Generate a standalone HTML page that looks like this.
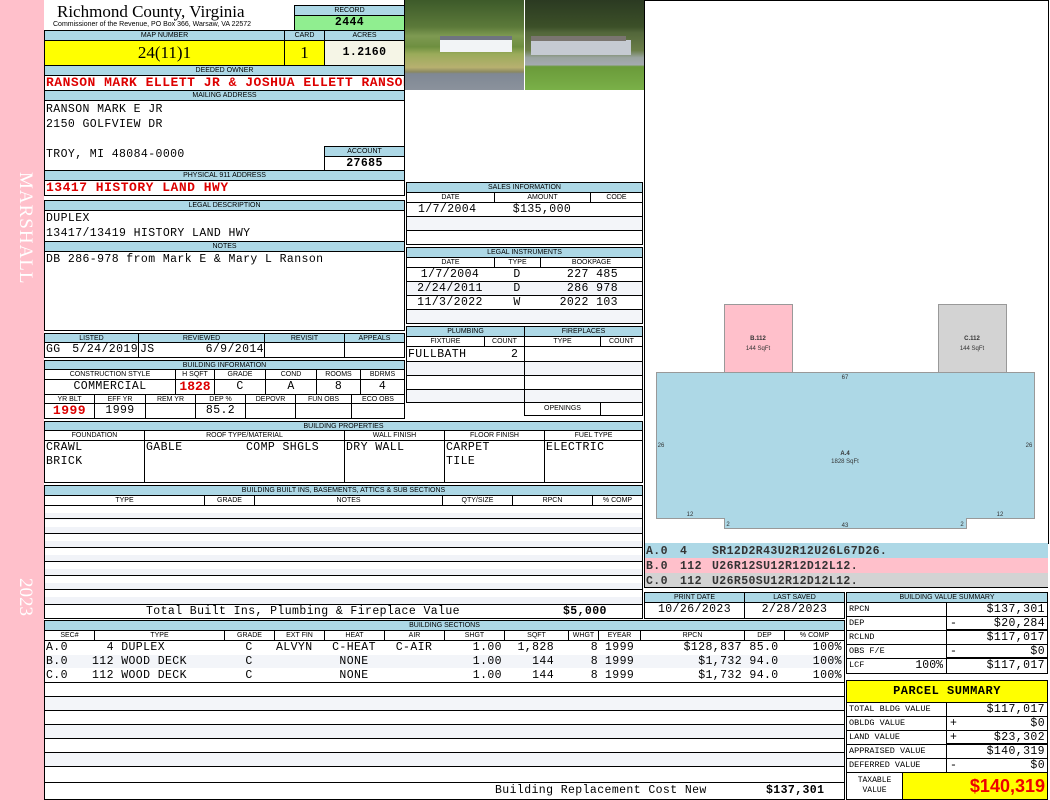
<!DOCTYPE html>
<html><head><meta charset="utf-8"><style>
*{margin:0;padding:0;box-sizing:border-box}
body{width:1050px;height:800px;position:relative;background:#fff;overflow:hidden;font-family:"Liberation Sans",sans-serif}
div{position:absolute}
.c{border:1px solid #000;background:#fff}
.h{background:#add8e6;border:1px solid #000;font:7px/9px "Liberation Sans",sans-serif;text-align:center;color:#000;white-space:nowrap;overflow:hidden}
.m{font:11.5px/14px "Liberation Mono",monospace;letter-spacing:0.4px;white-space:nowrap;color:#000}
.r{color:#d00;font-weight:bold;font-size:13px;letter-spacing:0.5px}
.g{background:#f3f5f9}
.t{font:8.5px/13px "Liberation Mono",monospace;white-space:nowrap}
.ce{text-align:center}.ri{text-align:right}
</style></head><body>
<div style="left:0;top:0;width:44px;height:800px;background:#ffc0cb"></div>
<div style="left:12px;top:172px;width:24px;font:19px 'Liberation Serif',serif;color:#fff;writing-mode:vertical-rl;letter-spacing:1px">MARSHALL</div>
<div style="left:12px;top:578px;width:24px;font:19px 'Liberation Serif',serif;color:#fff;writing-mode:vertical-rl">2023</div>

<div style="left:57px;top:2px;font:17px/20px 'Liberation Serif',serif">Richmond County, Virginia</div>
<div style="left:53px;top:20px;font:7px/9px 'Liberation Sans',sans-serif;white-space:nowrap">Commissioner of the Revenue, PO Box 366, Warsaw, VA 22572</div>
<div class="h" style="left:294px;top:5px;width:111px;height:11px">RECORD</div>
<div class="c m" style="left:294px;top:15px;width:111px;height:16px;background:#90ee90;text-align:center;font-weight:bold;line-height:14px">2444</div>

<div class="h" style="left:44px;top:30px;width:241px;height:11px">MAP NUMBER</div>
<div class="h" style="left:284px;top:30px;width:41px;height:11px">CARD</div>
<div class="h" style="left:324px;top:30px;width:81px;height:11px">ACRES</div>
<div class="c" style="left:44px;top:40px;width:241px;height:26px;background:#ffff00;font:17px/24px 'Liberation Serif',serif;text-align:center">24(11)1</div>
<div class="c" style="left:284px;top:40px;width:41px;height:26px;background:#ffff00;font:17px/24px 'Liberation Serif',serif;text-align:center">1</div>
<div class="c m" style="left:324px;top:40px;width:81px;height:26px;background:#f5f5e6;text-align:center;line-height:24px;font-weight:bold">1.2160</div>

<div class="h" style="left:44px;top:65px;width:361px;height:11px">DEEDED OWNER</div>
<div class="c m r" style="left:44px;top:75px;width:361px;height:16px;overflow:hidden;padding-left:1px">RANSON MARK ELLETT JR &amp; JOSHUA ELLETT RANSON</div>
<div class="h" style="left:44px;top:90px;width:361px;height:11px">MAILING ADDRESS</div>
<div class="c" style="left:44px;top:100px;width:361px;height:71px"></div>
<div class="m" style="left:46px;top:103px">RANSON MARK E JR</div>
<div class="m" style="left:46px;top:118px">2150 GOLFVIEW DR</div>
<div class="m" style="left:46px;top:148px">TROY, MI 48084-0000</div>
<div class="h" style="left:324px;top:146px;width:81px;height:11px">ACCOUNT</div>
<div class="c m" style="left:324px;top:156px;width:81px;height:15px;text-align:center;font-weight:bold;line-height:13px">27685</div>
<div class="h" style="left:44px;top:170px;width:361px;height:11px">PHYSICAL 911 ADDRESS</div>
<div class="c m r" style="left:44px;top:180px;width:361px;height:16px;padding-left:1px">13417 HISTORY LAND HWY</div>

<div class="h" style="left:44px;top:200px;width:361px;height:11px">LEGAL DESCRIPTION</div>
<div class="c" style="left:44px;top:210px;width:361px;height:121px"></div>
<div class="m" style="left:46px;top:212px">DUPLEX</div>
<div class="m" style="left:46px;top:227px">13417/13419 HISTORY LAND HWY</div>
<div class="h" style="left:44px;top:241px;width:361px;height:11px">NOTES</div>
<div class="m" style="left:46px;top:253px">DB 286-978 from Mark E &amp; Mary L Ranson</div>

<div class="h" style="left:44px;top:333px;width:95px;height:10px">LISTED</div>
<div class="h" style="left:138px;top:333px;width:127px;height:10px">REVIEWED</div>
<div class="h" style="left:264px;top:333px;width:81px;height:10px">REVISIT</div>
<div class="h" style="left:344px;top:333px;width:61px;height:10px">APPEALS</div>
<div class="c" style="left:44px;top:342px;width:95px;height:16px"></div>
<div class="c" style="left:138px;top:342px;width:127px;height:16px"></div>
<div class="c" style="left:264px;top:342px;width:81px;height:16px"></div>
<div class="c" style="left:344px;top:342px;width:61px;height:16px"></div>
<div class="m" style="left:46px;top:343px">GG</div><div class="m" style="left:64px;top:343px;width:74px;text-align:right">5/24/2019</div>
<div class="m" style="left:140px;top:343px">JS</div><div class="m" style="left:160px;top:343px;width:104px;text-align:right">6/9/2014</div>

<div class="h" style="left:44px;top:360px;width:361px;height:10px">BUILDING INFORMATION</div>
<div class="h" style="left:44px;top:369px;width:132px;height:11px;background:#fff">CONSTRUCTION STYLE</div>
<div class="h" style="left:175px;top:369px;width:40px;height:11px;background:#fff">H SQFT</div>
<div class="h" style="left:214px;top:369px;width:52px;height:11px;background:#fff">GRADE</div>
<div class="h" style="left:265px;top:369px;width:52px;height:11px;background:#fff">COND</div>
<div class="h" style="left:316px;top:369px;width:45px;height:11px;background:#fff">ROOMS</div>
<div class="h" style="left:360px;top:369px;width:45px;height:11px;background:#fff">BDRMS</div>
<div class="c m" style="left:44px;top:379px;width:132px;height:16px;text-align:center">COMMERCIAL</div>
<div class="c m r" style="left:175px;top:379px;width:40px;height:16px;text-align:center;letter-spacing:0">1828</div>
<div class="c m" style="left:214px;top:379px;width:52px;height:16px;text-align:center">C</div>
<div class="c m" style="left:265px;top:379px;width:52px;height:16px;text-align:center">A</div>
<div class="c m" style="left:316px;top:379px;width:45px;height:16px;text-align:center">8</div>
<div class="c m" style="left:360px;top:379px;width:45px;height:16px;text-align:center">4</div>
<div class="h" style="left:44px;top:394px;width:51px;height:10px;background:#fff">YR BLT</div>
<div class="h" style="left:94px;top:394px;width:52px;height:10px;background:#fff">EFF YR</div>
<div class="h" style="left:145px;top:394px;width:51px;height:10px;background:#fff">REM YR</div>
<div class="h" style="left:195px;top:394px;width:51px;height:10px;background:#fff">DEP %</div>
<div class="h" style="left:245px;top:394px;width:51px;height:10px;background:#fff">DEPOVR</div>
<div class="h" style="left:295px;top:394px;width:57px;height:10px;background:#fff">FUN OBS</div>
<div class="h" style="left:351px;top:394px;width:54px;height:10px;background:#fff">ECO OBS</div>
<div class="c m r" style="left:44px;top:403px;width:51px;height:16px;text-align:center">1999</div>
<div class="c m" style="left:94px;top:403px;width:52px;height:16px;text-align:center">1999</div>
<div class="c" style="left:145px;top:403px;width:51px;height:16px"></div>
<div class="c m" style="left:195px;top:403px;width:51px;height:16px;text-align:center">85.2</div>
<div class="c" style="left:245px;top:403px;width:51px;height:16px"></div>
<div class="c" style="left:295px;top:403px;width:57px;height:16px"></div>
<div class="c" style="left:351px;top:403px;width:54px;height:16px"></div>

<div class="h" style="left:44px;top:421px;width:599px;height:10px">BUILDING PROPERTIES</div>
<div class="h" style="left:44px;top:430px;width:101px;height:11px;background:#fff">FOUNDATION</div>
<div class="h" style="left:144px;top:430px;width:201px;height:11px;background:#fff">ROOF TYPE/MATERIAL</div>
<div class="h" style="left:344px;top:430px;width:101px;height:11px;background:#fff">WALL FINISH</div>
<div class="h" style="left:444px;top:430px;width:101px;height:11px;background:#fff">FLOOR FINISH</div>
<div class="h" style="left:544px;top:430px;width:99px;height:11px;background:#fff">FUEL TYPE</div>
<div class="c" style="left:44px;top:440px;width:101px;height:43px"></div>
<div class="c" style="left:144px;top:440px;width:201px;height:43px"></div>
<div class="c" style="left:344px;top:440px;width:101px;height:43px"></div>
<div class="c" style="left:444px;top:440px;width:101px;height:43px"></div>
<div class="c" style="left:544px;top:440px;width:99px;height:43px"></div>
<div class="m" style="left:46px;top:441px">CRAWL<br>BRICK</div>
<div class="m" style="left:146px;top:441px">GABLE</div><div class="m" style="left:246px;top:441px">COMP SHGLS</div>
<div class="m" style="left:346px;top:441px">DRY WALL</div>
<div class="m" style="left:446px;top:441px">CARPET<br>TILE</div>
<div class="m" style="left:546px;top:441px">ELECTRIC</div>

<div class="h" style="left:44px;top:485px;width:599px;height:11px">BUILDING BUILT INS, BASEMENTS, ATTICS &amp; SUB SECTIONS</div>
<div class="h" style="left:44px;top:495px;width:161px;height:11px;background:#fff">TYPE</div>
<div class="h" style="left:204px;top:495px;width:51px;height:11px;background:#fff">GRADE</div>
<div class="h" style="left:254px;top:495px;width:189px;height:11px;background:#fff">NOTES</div>
<div class="h" style="left:442px;top:495px;width:71px;height:11px;background:#fff">QTY/SIZE</div>
<div class="h" style="left:512px;top:495px;width:81px;height:11px;background:#fff">RPCN</div>
<div class="h" style="left:592px;top:495px;width:51px;height:11px;background:#fff">% COMP</div>
<div class="c" style="left:44px;top:505px;width:599px;height:100px;background:repeating-linear-gradient(#fff 0 7px,#f1f3f8 7px 14px);"></div>
<div style="left:45px;top:518px;width:597px;height:1px;background:#000"></div>
<div style="left:45px;top:533px;width:597px;height:1px;background:#000"></div>
<div style="left:45px;top:547px;width:597px;height:1px;background:#000"></div>
<div style="left:45px;top:561px;width:597px;height:1px;background:#000"></div>
<div style="left:45px;top:575px;width:597px;height:1px;background:#000"></div>
<div style="left:45px;top:589px;width:597px;height:1px;background:#000"></div>
<div class="c m" style="left:44px;top:604px;width:599px;height:15px;line-height:13px"><span style="position:absolute;left:101px">Total Built Ins, Plumbing &amp; Fireplace Value</span><span style="position:absolute;left:518px;font-weight:bold">$5,000</span></div>

<div class="h" style="left:44px;top:620px;width:801px;height:11px">BUILDING SECTIONS</div>
<div class="c" style="left:44px;top:630px;width:801px;height:170px"></div>
<div class="h" style="left:44px;top:630px;width:51px;height:11px;background:#fff">SEC#</div>
<div class="h" style="left:94px;top:630px;width:131px;height:11px;background:#fff">TYPE</div>
<div class="h" style="left:224px;top:630px;width:51px;height:11px;background:#fff">GRADE</div>
<div class="h" style="left:274px;top:630px;width:51px;height:11px;background:#fff">EXT FIN</div>
<div class="h" style="left:324px;top:630px;width:61px;height:11px;background:#fff">HEAT</div>
<div class="h" style="left:384px;top:630px;width:61px;height:11px;background:#fff">AIR</div>
<div class="h" style="left:444px;top:630px;width:61px;height:11px;background:#fff">SHGT</div>
<div class="h" style="left:504px;top:630px;width:65px;height:11px;background:#fff">SQFT</div>
<div class="h" style="left:568px;top:630px;width:31px;height:11px;background:#fff">WHGT</div>
<div class="h" style="left:598px;top:630px;width:43px;height:11px;background:#fff">EYEAR</div>
<div class="h" style="left:640px;top:630px;width:105px;height:11px;background:#fff">RPCN</div>
<div class="h" style="left:744px;top:630px;width:41px;height:11px;background:#fff">DEP</div>
<div class="h" style="left:784px;top:630px;width:61px;height:11px;background:#fff">% COMP</div>
<div class="g" style="left:45px;top:655px;width:799px;height:13px"></div>
<div class="g" style="left:45px;top:697px;width:799px;height:13px"></div>
<div class="g" style="left:45px;top:725px;width:799px;height:13px"></div>
<div class="g" style="left:45px;top:753px;width:799px;height:13px"></div>
<div style="left:45px;top:682px;width:799px;height:1px;background:#000"></div>
<div style="left:45px;top:696px;width:799px;height:1px;background:#000"></div>
<div style="left:45px;top:710px;width:799px;height:1px;background:#000"></div>
<div style="left:45px;top:724px;width:799px;height:1px;background:#000"></div>
<div style="left:45px;top:738px;width:799px;height:1px;background:#000"></div>
<div style="left:45px;top:752px;width:799px;height:1px;background:#000"></div>
<div style="left:45px;top:766px;width:799px;height:1px;background:#000"></div>
<div style="left:45px;top:782px;width:799px;height:1px;background:#000"></div>
<div class="m" style="left:46px;top:641px">A.0<br>B.0<br>C.0</div>
<div class="m" style="left:92px;top:641px">&nbsp;&nbsp;4 DUPLEX<br>112 WOOD DECK<br>112 WOOD DECK</div>
<div class="m ce" style="left:224px;top:641px;width:50px">C<br>C<br>C</div>
<div class="m" style="left:276px;top:641px">ALVYN</div>
<div class="m ce" style="left:324px;top:641px;width:60px">C-HEAT<br>NONE<br>NONE</div>
<div class="m ce" style="left:384px;top:641px;width:60px">C-AIR</div>
<div class="m ri" style="left:444px;top:641px;width:58px">1.00<br>1.00<br>1.00</div>
<div class="m ri" style="left:504px;top:641px;width:50px">1,828<br>144<br>144</div>
<div class="m ri" style="left:568px;top:641px;width:30px">8<br>8<br>8</div>
<div class="m" style="left:605px;top:641px">1999<br>1999<br>1999</div>
<div class="m ri" style="left:640px;top:641px;width:102px">$128,837<br>$1,732<br>$1,732</div>
<div class="m ce" style="left:744px;top:641px;width:40px">85.0<br>94.0<br>94.0</div>
<div class="m ri" style="left:784px;top:641px;width:58px">100%<br>100%<br>100%</div>
<div class="m" style="left:495px;top:784px">Building Replacement Cost New</div>
<div class="m" style="left:766px;top:784px;font-weight:bold">$137,301</div>

<div style="left:405px;top:0;width:119px;height:90px;background:linear-gradient(#3d5a2a 0,#5c7a3a 30%,#7e9a52 40%,#6e8f40 52%,#9aab5a 60%,#b7b070 75%,#8a8860 80%,#7f8894 82%,#8b929c 100%)"></div>
<div style="left:440px;top:38px;width:72px;height:14px;background:#f2f4f6"></div>
<div style="left:440px;top:36px;width:72px;height:4px;background:#6f7480"></div>
<div style="left:525px;top:0;width:119px;height:90px;background:linear-gradient(#2b3a22 0,#3c5028 30%,#52663a 36%,#6a7d48 56%,#9aa4a0 64%,#a4aab0 72%,#6a9a3a 74%,#7ab048 100%)"></div>
<div style="left:531px;top:40px;width:100px;height:15px;background:#c5cad2"></div>
<div style="left:531px;top:36px;width:95px;height:5px;background:#7a7570"></div>
<div style="left:404px;top:0;width:1px;height:182px;background:#000"></div>

<div class="h" style="left:406px;top:182px;width:237px;height:11px">SALES INFORMATION</div>
<div class="h" style="left:406px;top:192px;width:89px;height:11px;background:#fff">DATE</div>
<div class="h" style="left:494px;top:192px;width:97px;height:11px;background:#fff">AMOUNT</div>
<div class="h" style="left:590px;top:192px;width:53px;height:11px;background:#fff">CODE</div>
<div class="c" style="left:406px;top:202px;width:237px;height:43px"></div>
<div class="g" style="left:407px;top:217px;width:235px;height:13px"></div>
<div style="left:407px;top:216px;width:235px;height:1px;background:#000"></div>
<div style="left:407px;top:230px;width:235px;height:1px;background:#000"></div>
<div class="m" style="left:418px;top:203px">1/7/2004</div>
<div class="m ce" style="left:494px;top:203px;width:96px">$135,000</div>

<div class="h" style="left:406px;top:247px;width:237px;height:11px">LEGAL INSTRUMENTS</div>
<div class="h" style="left:406px;top:257px;width:89px;height:11px;background:#fff">DATE</div>
<div class="h" style="left:494px;top:257px;width:47px;height:11px;background:#fff">TYPE</div>
<div class="h" style="left:540px;top:257px;width:103px;height:11px;background:#fff">BOOKPAGE</div>
<div class="c" style="left:406px;top:267px;width:237px;height:57px"></div>
<div class="g" style="left:407px;top:282px;width:235px;height:13px"></div>
<div class="g" style="left:407px;top:310px;width:235px;height:13px"></div>
<div style="left:407px;top:281px;width:235px;height:1px;background:#000"></div>
<div style="left:407px;top:295px;width:235px;height:1px;background:#000"></div>
<div style="left:407px;top:309px;width:235px;height:1px;background:#000"></div>
<div class="m ce" style="left:406px;top:268px;width:88px">1/7/2004<br>2/24/2011<br>11/3/2022</div>
<div class="m ce" style="left:494px;top:268px;width:46px">D<br>D<br>W</div>
<div class="m ri" style="left:540px;top:268px;width:78px">227 485<br>286 978<br>2022 103</div>

<div class="h" style="left:406px;top:326px;width:119px;height:11px">PLUMBING</div>
<div class="h" style="left:524px;top:326px;width:119px;height:11px">FIREPLACES</div>
<div class="h" style="left:406px;top:336px;width:79px;height:11px;background:#fff">FIXTURE</div>
<div class="h" style="left:484px;top:336px;width:41px;height:11px;background:#fff">COUNT</div>
<div class="h" style="left:524px;top:336px;width:77px;height:11px;background:#fff">TYPE</div>
<div class="h" style="left:600px;top:336px;width:43px;height:11px;background:#fff">COUNT</div>
<div class="c" style="left:406px;top:346px;width:119px;height:57px"></div>
<div class="c" style="left:524px;top:346px;width:119px;height:57px"></div>
<div class="g" style="left:407px;top:362px;width:235px;height:13px"></div>
<div class="g" style="left:407px;top:390px;width:235px;height:12px"></div>
<div style="left:407px;top:361px;width:235px;height:1px;background:#000"></div>
<div style="left:407px;top:375px;width:235px;height:1px;background:#000"></div>
<div style="left:407px;top:389px;width:235px;height:1px;background:#000"></div>
<div style="left:524px;top:346px;width:1px;height:57px;background:#000"></div>
<div class="m" style="left:408px;top:348px">FULLBATH</div>
<div class="m" style="left:511px;top:348px">2</div>
<div class="h" style="left:524px;top:402px;width:77px;height:14px;background:#fff;line-height:12px">OPENINGS</div>
<div class="c" style="left:600px;top:402px;width:43px;height:14px"></div>

<div class="c" style="left:644px;top:0;width:405px;height:544px"></div>
<svg style="position:absolute;left:0;top:0" width="1050" height="800">
<rect x="724.5" y="304.5" width="68" height="68" fill="#ffc0cb" stroke="#999"/>
<rect x="938.5" y="304.5" width="68" height="68" fill="#d3d3d3" stroke="#999"/>
<polygon points="656.5,372.5 1034.5,372.5 1034.5,518.5 966.5,518.5 966.5,528.5 724.5,528.5 724.5,518.5 656.5,518.5" fill="#add8e6" stroke="#999"/>
<g font-family="Liberation Sans" font-size="6" text-anchor="middle" fill="#333">
<text x="758" y="340" font-weight="bold">B.112</text><text x="758" y="350">144 SqFt</text>
<text x="972" y="340" font-weight="bold">C.112</text><text x="972" y="350">144 SqFt</text>
<text x="845" y="455" font-weight="bold">A.4</text><text x="845" y="463">1828 SqFt</text>
<text x="845" y="379">67</text><text x="661" y="447">26</text><text x="1029" y="447">26</text>
<text x="690" y="516">12</text><text x="1000" y="516">12</text><text x="728" y="526">2</text><text x="962" y="526">2</text><text x="845" y="527">43</text>
</g></svg>

<div style="left:644px;top:543px;width:404px;height:15px;background:#add8e6;border-left:1px solid #000"></div>
<div style="left:644px;top:558px;width:404px;height:15px;background:#ffc0cb;border-left:1px solid #000"></div>
<div style="left:644px;top:573px;width:404px;height:15px;background:#d3d3d3;border-left:1px solid #000;border-bottom:1px solid #000"></div>
<div class="m" style="left:646px;top:544px;font-weight:bold;color:#333;line-height:15px">A.0<br>B.0<br>C.0</div>
<div class="m" style="left:680px;top:544px;font-weight:bold;color:#333;line-height:15px">4<br>112<br>112</div>
<div class="m" style="left:712px;top:544px;font-weight:bold;color:#333;line-height:15px">SR12D2R43U2R12U26L67D26.<br>U26R12SU12R12D12L12.<br>U26R50SU12R12D12L12.</div>

<div class="h" style="left:644px;top:592px;width:101px;height:11px">PRINT DATE</div>
<div class="h" style="left:744px;top:592px;width:101px;height:11px">LAST SAVED</div>
<div class="c m" style="left:644px;top:602px;width:101px;height:17px;text-align:center">10/26/2023</div>
<div class="c m" style="left:744px;top:602px;width:101px;height:17px;text-align:center">2/28/2023</div>

<div class="h" style="left:846px;top:592px;width:202px;height:11px">BUILDING VALUE SUMMARY</div>
<div class="c t" style="left:846px;top:602px;width:101px;height:15px;padding-left:2px">RPCN</div>
<div class="c m" style="left:946px;top:602px;width:102px;height:15px;text-align:right;padding-right:2px">$137,301</div>
<div class="c t" style="left:846px;top:616px;width:101px;height:15px;padding-left:2px">DEP</div>
<div class="c m" style="left:946px;top:616px;width:102px;height:15px;text-align:right;padding-right:2px;border-bottom:2px solid #000"><span style="position:absolute;left:3px">-</span>$20,284</div>
<div class="c t" style="left:846px;top:630px;width:101px;height:15px;padding-left:2px">RCLND</div>
<div class="c m" style="left:946px;top:630px;width:102px;height:15px;text-align:right;padding-right:2px">$117,017</div>
<div class="c t" style="left:846px;top:644px;width:101px;height:15px;padding-left:2px">OBS F/E</div>
<div class="c m" style="left:946px;top:644px;width:102px;height:15px;text-align:right;padding-right:2px;border-bottom:2px solid #000"><span style="position:absolute;left:3px">-</span>$0</div>
<div class="c t" style="left:846px;top:658px;width:101px;height:16px;padding-left:2px">LCF<span style="position:absolute;right:3px;font:11.5px/14px 'Liberation Mono',monospace">100%</span></div>
<div class="c m" style="left:946px;top:658px;width:102px;height:16px;text-align:right;padding-right:2px">$117,017</div>

<div class="c" style="left:846px;top:680px;width:202px;height:23px;background:#ffff00;font:bold 12px/21px 'Liberation Mono',monospace;letter-spacing:0.5px;text-align:center">PARCEL SUMMARY</div>
<div class="c t" style="left:846px;top:702px;width:101px;height:15px;padding-left:2px">TOTAL BLDG VALUE</div>
<div class="c m" style="left:946px;top:702px;width:102px;height:15px;text-align:right;padding-right:2px">$117,017</div>
<div class="c t" style="left:846px;top:716px;width:101px;height:15px;padding-left:2px">OBLDG VALUE</div>
<div class="c m" style="left:946px;top:716px;width:102px;height:15px;text-align:right;padding-right:2px"><span style="position:absolute;left:3px">+</span>$0</div>
<div class="c t" style="left:846px;top:730px;width:101px;height:15px;padding-left:2px">LAND VALUE</div>
<div class="c m" style="left:946px;top:730px;width:102px;height:15px;text-align:right;padding-right:2px;border-bottom:2px solid #000"><span style="position:absolute;left:3px">+</span>$23,302</div>
<div class="c t" style="left:846px;top:744px;width:101px;height:15px;padding-left:2px">APPRAISED VALUE</div>
<div class="c m" style="left:946px;top:744px;width:102px;height:15px;text-align:right;padding-right:2px">$140,319</div>
<div class="c t" style="left:846px;top:758px;width:101px;height:15px;padding-left:2px">DEFERRED VALUE</div>
<div class="c m" style="left:946px;top:758px;width:102px;height:15px;text-align:right;padding-right:2px"><span style="position:absolute;left:3px">-</span>$0</div>
<div class="c" style="left:846px;top:772px;width:57px;height:28px;font:8px/10px 'Liberation Mono',monospace;text-align:center;padding-top:3px">TAXABLE<br>VALUE</div>
<div class="c" style="left:902px;top:772px;width:146px;height:28px;background:#ffff00;color:#e00;font:bold 18px/26px 'Liberation Sans',sans-serif;text-align:right;padding-right:2px">$140,319</div>
</body></html>
